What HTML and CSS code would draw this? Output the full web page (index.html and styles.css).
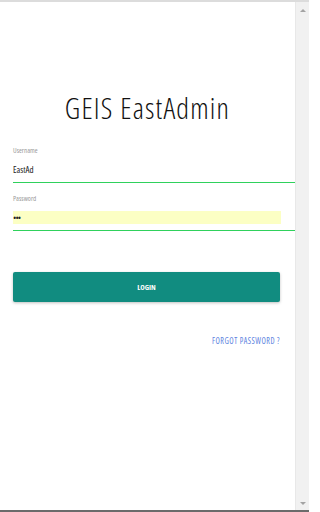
FILE: index.html
```html
<!DOCTYPE html>
<html>
<head>
<meta charset="utf-8">
<link rel="stylesheet" href="styles.css">
</head>
<body>
<div class="frame">
  <div class="main">
    <h1 class="title">GEIS EastAdmin</h1>
    <form class="form">
      <div class="field">
        <label class="label">Username</label>
        <div class="value-wrap"><span class="value">EastAd</span></div>
      </div>
      <div class="field">
        <label class="label">Password</label>
        <div class="value-wrap autofill"><span class="dots">•••</span></div>
      </div>
      <button type="button" class="login">LOGIN</button>
      <div class="forgot-row"><a class="forgot">FORGOT PASSWORD ?</a></div>
    </form>
  </div>
  <div class="scrollbar">
    <span class="arrow up"></span>
    <span class="arrow down"></span>
  </div>
</div>
<div class="bottom-edge"></div>
</body>
</html>
```
FILE: styles.css
```css
html, body {
  margin: 0;
  padding: 0;
  background: #fff;
  height: 100%;
  overflow: hidden;
}
body {
  font-family: "Open Sans", "DejaVu Sans", sans-serif;
  font-stretch: 85%;
  display: flex;
  flex-direction: column;
  height: 512px;
}
.frame {
  flex: 1;
  width: 309px;
  display: flex;
  border-top: 2px solid #dcdcdc;
  min-height: 0;
}
.main {
  width: 295px;
  flex: none;
}
.title {
  margin: 88px 0 0 0;
  text-align: center;
  font-weight: 300;
  font-size: 29px;
  line-height: 36px;
  letter-spacing: 1.2px;
  color: #111;
}
.form {
  padding: 20px 0 0 13px;
}
.field {
  border-bottom: 1.5px solid #2fd15c;
  margin-bottom: 11px;
}
.label {
  display: block;
  font-size: 7px;
  line-height: 9px;
  color: #9a9a9a;
}
.value-wrap {
  margin: 8px 14px 6px 0;
  height: 13px;
  display: flex;
  align-items: center;
}
.autofill {
  background: #fcffc4;
}
.value {
  font-size: 9px;
  color: #222;
}
.dots {
  font-size: 9px;
  color: #222;
  letter-spacing: -1px;
}
.login {
  display: block;
  width: 267px;
  height: 30px;
  margin-top: 41px;
  border: none;
  border-radius: 2px;
  background: #118c80;
  color: #fff;
  font-family: inherit;
  font-stretch: 80%;
  font-weight: 700;
  font-size: 7.5px;
  box-shadow: 0 1px 3px rgba(0,0,0,0.25);
  padding: 0;
}
.forgot-row {
  width: 267px;
  display: flex;
  justify-content: flex-end;
  margin-top: 33px;
}
.forgot {
  font-size: 8px;
  letter-spacing: 0.5px;
  color: #5b82e0;
}
.scrollbar {
  width: 14px;
  flex: none;
  background: #f1f1f1;
  border-left: 1px solid #e8e8e8;
  box-sizing: border-box;
  display: flex;
  flex-direction: column;
  justify-content: space-between;
  align-items: center;
  padding: 7px 0 5px;
}
.arrow {
  width: 0;
  height: 0;
  border-left: 3px solid transparent;
  border-right: 3px solid transparent;
}
.arrow.up {
  border-bottom: 3px solid #a3a3a3;
}
.arrow.down {
  border-top: 3px solid #a3a3a3;
}
.bottom-edge {
  height: 2px;
  width: 309px;
  background: #6b6b6b;
  flex: none;
}
```
